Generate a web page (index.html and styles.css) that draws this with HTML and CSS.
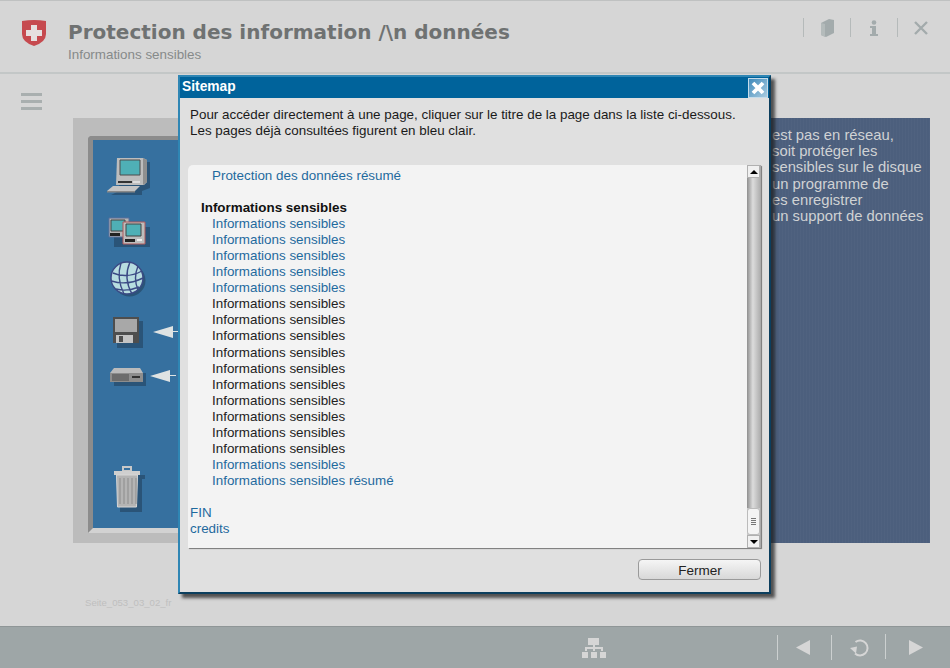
FILE: index.html
```html
<!DOCTYPE html>
<html lang="fr">
<head>
<meta charset="utf-8">
<title>Protection des données</title>
<link rel="stylesheet" href="styles.css">
</head>
<body>
<div class="page">
  <header class="top">
    <svg class="shield" width="26" height="28" viewBox="0 0 26 28"><path d="M1 2 Q13 0 25 2 V15 Q25 23 13 27 Q1 23 1 15Z" fill="#c64a4f"/><path d="M10 6h6v5h5v6h-5v5h-6v-5H5v-6h5z" fill="#e6e0e0"/></svg>
    <div class="titles">
      <div class="title">Protection des information /\n données</div>
      <div class="subtitle">Informations sensibles</div>
    </div>
    <div class="tools">
      <span class="sep"></span>
      <span class="tbox"><svg width="13" height="18" viewBox="0 0 13 18"><path d="M0 4 L8 0 L13 1 V14 L5 18 L0 16Z" fill="#a3abac"/><path d="M0 4 L4 5 V18 L0 16Z" fill="#b4bbbb"/></svg></span>
      <span class="sep"></span>
      <span class="tbox"><svg width="8" height="16" viewBox="0 0 8 16"><circle cx="4" cy="2.500" r="2.300" fill="#a3abac"/><path d="M0 6h6v8h2v2H0v-2h2V8H0z" fill="#a3abac"/></svg></span>
      <span class="sep"></span>
      <span class="tbox"><svg width="14" height="14" viewBox="0 0 14 14"><path d="M1 1l12 12M13 1L1 13" stroke="#a3abac" stroke-width="2.400"/></svg></span>
    </div>
  </header>

  <main class="main">
    <div class="burger"><i></i><i></i><i></i></div>
    <section class="stage">
      <div class="desk">
        <div class="screen">
          <div class="icons">
            <svg class="ico-pc" width="46" height="40" viewBox="0 0 46 40">
              <path d="M13 4h30v26l-8 3v4H4l8-4z" fill="#2a5478"/>
              <path d="M10 0h26l4 2v22l-3 3H9z" fill="#bdbdbd"/><path d="M36 0l4 2v22l-4 3z" fill="#8f8f8f"/>
              <path d="M13 2h20v15H13z" fill="#4fb0b6" stroke="#4d4d4d"/>
              <path d="M11 23h14v2H11z" fill="#333"/><path d="M26 23h7v2h-7z" fill="#ddd"/>
              <path d="M6 28h27l-5 5H0z" fill="#c4c4c4"/><path d="M0 33h28v1.500H0z" fill="#888"/>
            </svg>
            <svg class="ico-net" width="42" height="30" viewBox="0 0 42 30">
              <path d="M6 10h36v20H6z" fill="#2a5478"/>
              <path d="M1 1h20v19H1z" fill="#b5b5b5" stroke="#5b6f9a"/><path d="M3 3h14v11H3z" fill="#4fb0b6" stroke="#444"/><path d="M2 16h10v3H2z" fill="#222"/>
              <path d="M15 5h22v22H15z" fill="#bdbdbd" stroke="#b0585a"/><path d="M18 7h15v12H18z" fill="#4fb0b6" stroke="#444"/><path d="M17 22h10v3H17z" fill="#222"/><path d="M29 22h5v2h-5z" fill="#eee"/>
            </svg>
            <svg class="ico-globe" width="36" height="36" viewBox="0 0 36 36">
              <circle cx="19.500" cy="19.500" r="16" fill="#2a5478"/>
              <circle cx="17" cy="17" r="16" fill="#b7dde0" stroke="#3b4a85" stroke-width="1.400"/>
              <path d="M3 12Q17 18 32 10M1.500 20Q17 25 33 17M6 28Q17 31 29 26M11 2Q6 17 14 33M20 1Q13 17 22 33M28 5Q23 17 28 29" fill="none" stroke="#3b4a85" stroke-width="1.400"/>
            </svg>
            <div class="arrowed">
              <svg class="ico-floppy" width="32" height="31" viewBox="0 0 32 31">
                <path d="M4 4h26v27H4z" fill="#2a5478"/>
                <path d="M0 0h26v26H0z" fill="#4e4e4e"/><path d="M2 2h22v13H2z" fill="#a8a8a8"/><path d="M3 18h17v8H3z" fill="#c4c4c4"/><path d="M6 19h4v6H6z" fill="#4e4e4e"/>
              </svg>
              <svg class="arrow" width="26" height="12" viewBox="0 0 26 12"><path d="M0 6L20 0v5h6v1h-6v6z" fill="#dfe3e3"/></svg>
            </div>
            <div class="arrowed">
              <svg class="ico-drive" width="36" height="18" viewBox="0 0 36 18">
                <path d="M4 5h32v13H4z" fill="#2a5478"/>
                <path d="M4 0h26l3 5v1H0V5z" fill="#bbb"/><path d="M0 5h33v9H0z" fill="#8d8d8d"/><path d="M2 6h17v7H2z" fill="#6c6c6c"/><path d="M22 8h8v2h-8z" fill="#333"/>
              </svg>
              <svg class="arrow" width="26" height="12" viewBox="0 0 26 12"><path d="M0 6L20 0v5h6v1h-6v6z" fill="#dfe3e3"/></svg>
            </div>
            <svg class="ico-trash" width="32" height="46" viewBox="0 0 32 46">
              <path d="M7 9h25v4h-3v33H7z" fill="#2a5478"/>
              <path d="M10 1h8v4h-8z" fill="none" stroke="#c8c8c8" stroke-width="2"/>
              <path d="M1 5h26v4H1z" fill="#cfcfcf"/><path d="M3.500 9h21l-1 32h-19z" fill="#b4b4b4" stroke="#d6d6d6"/>
              <path d="M7 12v26M11 12v26M15 12v26M19 12v26M23 12v26" stroke="#8c8c8c"/>
            </svg>
          </div>
        </div>
      </div>
      <div class="note">
        <p>est pas en réseau,</p>
        <p>soit protéger les</p>
        <p>sensibles sur le disque</p>
        <p>un programme de</p>
        <p>es enregistrer</p>
        <p>un support de données</p>
      </div>
    </section>
    <div class="pageid">Seite_053_03_02_fr</div>
  </main>

  <footer class="bottom">
    <svg class="sitemap" width="24" height="20" viewBox="0 0 24 20"><path d="M6 0h11v7H6zM11 7h2v3h-2zM3 9h18v2H3zM3 10h2v3H3zM11 10h2v3h-2zM19 10h2v3h-2zM0 14h6v6H0zM9 14h6v6H9zM18 14h6v6h-6z" fill="#d6d6d6"/></svg>
    <div class="navs">
      <span class="fsep"></span>
      <span class="nbox nprev"><svg width="14" height="15" viewBox="0 0 14 15"><path d="M14 0v15L0 7.500z" fill="#d6d6d6"/></svg></span>
      <span class="fsep"></span>
      <span class="nbox nreload"><svg width="20" height="19" viewBox="0 0 20 19"><path d="M5.500 4A7.500 7.500 0 1 1 5 15.500" fill="none" stroke="#d6d6d6" stroke-width="2"/><path d="M0 10l7-1.500-1 7z" fill="#d6d6d6"/></svg></span>
      <span class="fsep fsep-high"></span>
      <span class="nbox nnext"><svg width="14" height="15" viewBox="0 0 14 15"><path d="M0 0v15l14-7.500z" fill="#d6d6d6"/></svg></span>
    </div>
  </footer>

  <div class="dialog">
    <div class="dlg-title">
      <span>Sitemap</span>
      <button class="dlg-x" aria-label="Fermer"><svg width="16" height="16" viewBox="0 0 16 16"><path d="M3 3l10 10M13 3L3 13" stroke="#fff" stroke-width="3.800"/></svg></button>
    </div>
    <div class="dlg-body">
      <p class="intro">Pour accéder directement à une page, cliquer sur le titre de la page dans la liste ci-dessous.<br>Les pages déjà consultées figurent en bleu clair.</p>
      <div class="listbox">
        <ul class="list">
          <li class="sub seen">Protection des données résumé</li>
          <li class="gap"></li>
          <li class="head">Informations sensibles</li>
          <li class="sub seen">Informations sensibles</li>
          <li class="sub seen">Informations sensibles</li>
          <li class="sub seen">Informations sensibles</li>
          <li class="sub seen">Informations sensibles</li>
          <li class="sub seen">Informations sensibles</li>
          <li class="sub">Informations sensibles</li>
          <li class="sub">Informations sensibles</li>
          <li class="sub">Informations sensibles</li>
          <li class="sub">Informations sensibles</li>
          <li class="sub">Informations sensibles</li>
          <li class="sub">Informations sensibles</li>
          <li class="sub">Informations sensibles</li>
          <li class="sub">Informations sensibles</li>
          <li class="sub">Informations sensibles</li>
          <li class="sub">Informations sensibles</li>
          <li class="sub seen">Informations sensibles</li>
          <li class="sub seen">Informations sensibles résumé</li>
          <li class="gap"></li>
          <li class="seen">FIN</li>
          <li class="seen">credits</li>
        </ul>
        <div class="scroll">
          <div class="sbtn"><i class="up"></i></div>
          <div class="track"></div>
          <div class="thumb"><b></b><b></b><b></b><b></b></div>
          <div class="sbtn"><i class="down"></i></div>
        </div>
      </div>
      <div class="actions"><button class="close">Fermer</button></div>
    </div>
  </div>
</div>
</body>
</html>
```
FILE: styles.css
```css
* { box-sizing: border-box; }
html, body { margin: 0; padding: 0; }
body { font-family: "Liberation Sans", Arial, sans-serif; background: #d6d6d6; }
.page { position: relative; width: 950px; height: 668px; display: flex; flex-direction: column; overflow: hidden; }

.top { height: 74px; flex: none; display: flex; align-items: flex-start; background: #d6d6d6; border-top: 1px solid #bfc1c1; border-bottom: 2px solid #c3c7c7; padding: 17px 0 0 21px; }
.shield { flex: none; margin-top: 1px; }
.titles { margin-left: 21px; flex: 1; }
.title { font-family: "DejaVu Sans", Verdana, sans-serif; font-size: 20px; font-weight: 700; color: #6f7272; line-height: 26px; margin-top: 1px; white-space: nowrap; }
.subtitle { font-size: 13.400px; color: #868a8a; line-height: 16px; margin-top: 2px; }
.tools { display: flex; align-items: center; height: 19px; padding-right: 6px; }
.sep { width: 1px; height: 19px; background: #b5baba; }
.tbox { width: 46px; display: flex; justify-content: center; }
.tbox svg { display: block; }

.main { flex: 1; position: relative; padding: 44px 20px 0 73px; }
.burger { position: absolute; left: 21px; top: 19px; width: 21px; display: flex; flex-direction: column; gap: 4.500px; }
.burger i { display: block; height: 2.500px; background: #a9afaf; }
.stage { display: grid; grid-template-columns: 1fr 160px; height: 425px; }
.desk { background: #bcbcbc; padding: 18px 0 10px 15px; }
.screen { height: 100%; background: #36709f; border-left: 5px solid #8c8c8c; border-top: 4px solid #8c8c8c; border-bottom: 5px solid #d2d2d2; border-top-left-radius: 4px; }
.icons { display: flex; flex-direction: column; padding: 18px 0 0 14px; }
.ico-pc { display: block; }
.ico-net { display: block; margin: 19px 0 0 1px; }
.ico-globe { display: block; margin: 14px 0 0 3px; }
.arrowed { display: flex; margin-top: 20px; }
.ico-floppy { display: block; margin-left: 6px; }
.ico-drive { display: block; margin-left: 3px; }
.arrow { display: block; }
.ico-floppy + .arrow { margin: 9px 0 0 8px; }
.ico-drive + .arrow { margin: 2px 0 0 4px; }
.ico-trash { display: block; margin: 80px 0 0 6px; }

.note { background: #4c5f7d repeating-linear-gradient(90deg, rgba(255,255,255,.02) 0 1px, transparent 1px 3px); color: #d0d2d4; font-size: 14.800px; line-height: 16.200px; padding: 9px 0 0 2px; white-space: nowrap; overflow: hidden; }
.note p { margin: 0; }
.pageid { font-size: 9.600px; color: #bfbfbf; margin: 54px 0 0 12px; }

.bottom { height: 42px; flex: none; background: #9ea6a7; border-top: 1px solid #8f9697; display: flex; align-items: center; padding-left: 582px; }
.sitemap { display: block; }
.navs { display: flex; align-items: center; margin-left: auto; padding-right: 5px; }
.fsep { width: 1px; height: 25px; background: #ccd0d0; }
.fsep-high { margin-top: -3px; }
.nbox { width: 53px; display: flex; justify-content: center; }
.nbox svg { display: block; }
.nprev { padding-right: 3px; }
.nreload { padding-left: 2px; }
.nnext { width: 59px; }

.dialog { position: absolute; left: 178px; top: 75px; width: 593px; height: 519px; background: #e0e0e0; border: 2px solid #2f86b4; border-right-color: #0c3f5e; border-bottom-color: #0c3f5e; box-shadow: 4px 4px 3px rgba(30,30,30,.72); display: flex; flex-direction: column; }
.dlg-title { height: 21px; flex: none; background: #00639b; color: #fff; font-size: 13.800px; font-weight: 700; line-height: 19px; padding-left: 2px; position: relative; }
.dlg-x { position: absolute; right: 1px; top: 1px; width: 20px; height: 20px; border: 1px solid #c5dcea; background: linear-gradient(135deg, #3f8abb, #a9cbe0); padding: 0; display: flex; align-items: center; justify-content: center; }
.dlg-body { flex: 1; display: flex; flex-direction: column; padding: 0 8px; }
.intro { margin: 9px 0 0 2px; font-size: 13.400px; line-height: 16.400px; color: #1a1a1a; height: 58px; flex: none; }
.listbox { height: 383px; flex: none; display: flex; background: #f3f3f3; border-radius: 5px 0 0 0; box-shadow: 1px 1px 1px #777; border-right: 1px solid #aaa; }
.list { list-style: none; margin: 0; padding: 3px 0 0 2px; flex: 1; font-size: 13.400px; line-height: 16.050px; color: #222; }
.sub { padding-left: 22px; }
.seen { color: #1f6a9e; }
.head { font-weight: 700; color: #111; padding-left: 11px; }
.gap { height: 16.050px; }
.scroll { width: 13px; flex: none; display: flex; flex-direction: column; background: #c9c9c9; }
.sbtn { height: 13px; flex: none; background: #f0f0f0; border: 1px solid #b0b0b0; display: flex; align-items: center; justify-content: center; }
.sbtn i { display: block; width: 0; height: 0; border-left: 4px solid transparent; border-right: 4px solid transparent; }
.up { border-bottom: 4px solid #000; }
.down { border-top: 4px solid #000; }
.track { flex: 1; background: linear-gradient(to right, #8e8e8e, #dcdcdc 45%, #b0b0b0); }
.thumb { height: 27px; flex: none; background: #f4f4f4; border: 1px solid #bbb; border-radius: 3px; display: flex; flex-direction: column; gap: 1px; align-items: center; justify-content: center; }
.thumb b { display: block; width: 5px; height: 1px; background: #777; }
.actions { flex: 1; display: flex; justify-content: flex-end; padding-top: 11px; align-items: flex-start; }
.close { width: 123px; height: 21px; font-family: "Liberation Sans", Arial, sans-serif; font-size: 13.500px; color: #222; background: linear-gradient(#f5f5f5, #d8d8d8); border: 1px solid #9a9a9a; border-radius: 4px; padding: 2px 0 0 1px; }
```
